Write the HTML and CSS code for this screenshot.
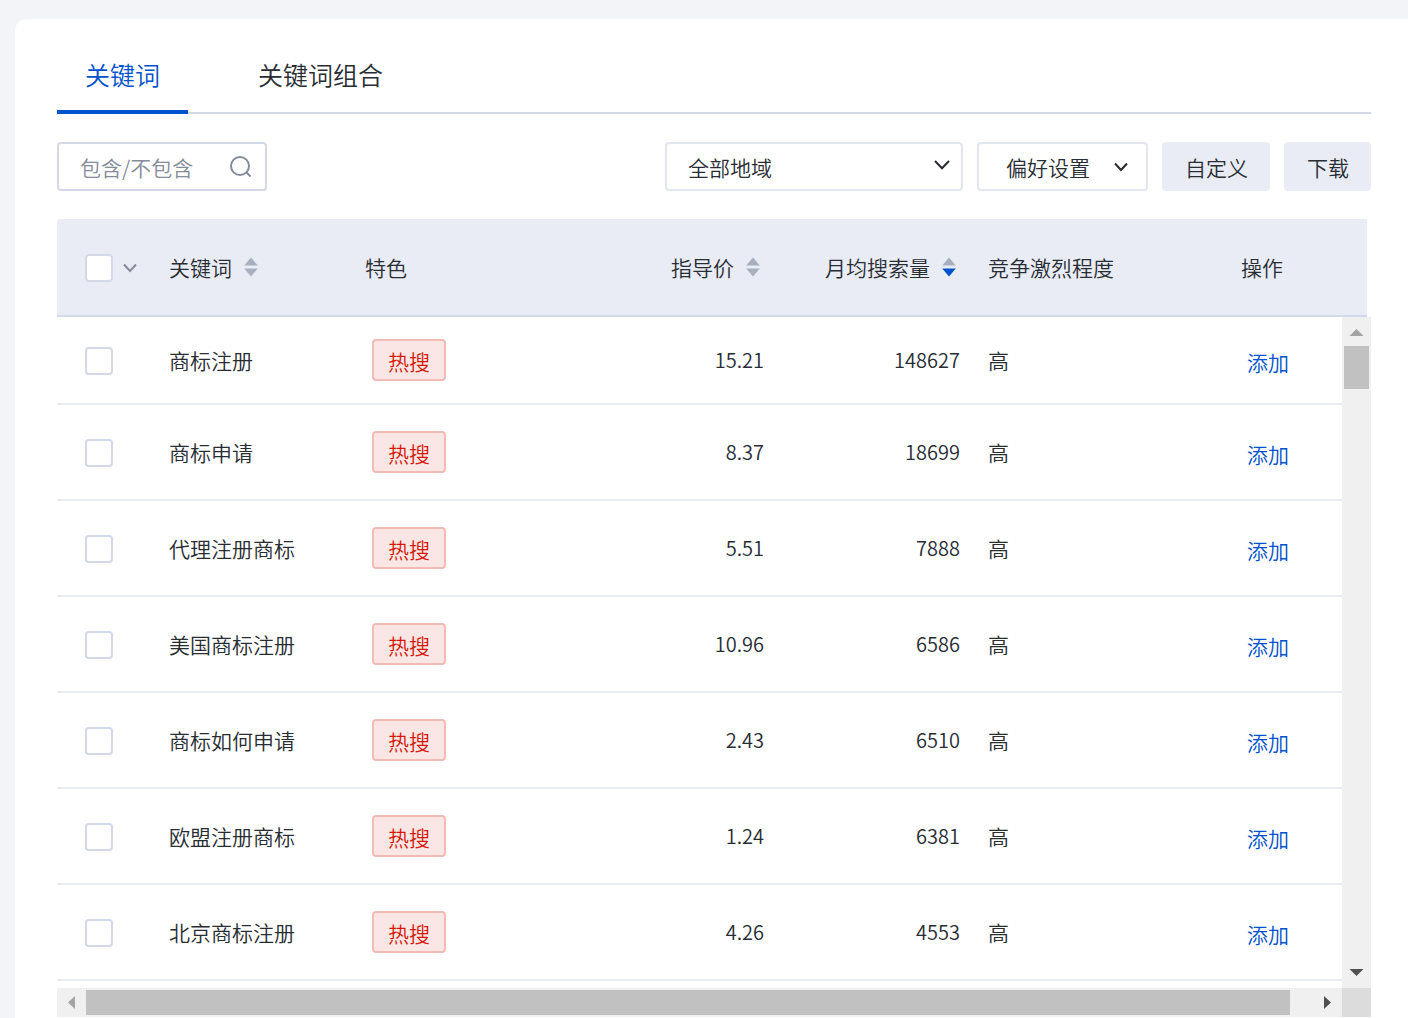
FILE: index.html
```html
<!DOCTYPE html>
<html lang="zh-CN">
<head>
<meta charset="utf-8">
<title>关键词</title>
<link rel="stylesheet" href="styles.css">
</head>
<body>
<svg class="defs" width="0" height="0" aria-hidden="true">
  <symbol id="sort" viewBox="0 0 14 20"><path class="up" d="M7 0.5 13.8 8.6H0.2Z"/><path class="down" d="M7 19.5 13.8 11.4H0.2Z"/></symbol>
</svg>
<main class="panel">
  <nav class="tabs">
    <button class="tab tab-active" type="button">关键词</button>
    <button class="tab" type="button">关键词组合</button>
  </nav>

  <div class="toolbar">
    <label class="search">
      <input class="search-input" type="text" placeholder="包含/不包含" aria-label="包含/不包含">
      <svg class="search-icon" width="24" height="24" viewBox="0 0 24 24"><circle cx="11" cy="11" r="9"/><path d="M17.5 17.5 21.5 21.5"/></svg>
    </label>
    <div class="region">
      <select class="region-select" aria-label="全部地域"><option>全部地域</option></select>
      <svg class="region-arrow" width="16" height="10" viewBox="0 0 16 10"><path d="M1 1 8 8.2 15 1"/></svg>
    </div>
    <button class="prefs" type="button">偏好设置<svg class="prefs-arrow" width="14" height="10" viewBox="0 0 14 10"><path d="M1 1.5 7 8 13 1.5"/></svg></button>
    <button class="btn" type="button">自定义</button>
    <button class="btn" type="button">下载</button>
  </div>

  <table class="grid grid-head">
    <colgroup><col class="c-check"><col class="c-word"><col class="c-tag"><col class="c-num"><col class="c-num"><col class="c-level"><col></colgroup>
    <thead>
      <tr>
        <th class="check"><div class="check-all"><input class="box" type="checkbox" aria-label="全选"><svg class="check-arrow" width="14" height="10" viewBox="0 0 14 10"><path d="M1 1.5 7 8 13 1.5"/></svg></div></th>
        <th><span class="sortable">关键词<svg class="sort" width="14" height="20"><use href="#sort"/></svg></span></th>
        <th>特色</th>
        <th class="num"><span class="sortable">指导价<svg class="sort" width="14" height="20"><use href="#sort"/></svg></span></th>
        <th class="num"><span class="sortable">月均搜索量<svg class="sort sort-desc" width="14" height="20"><use href="#sort"/></svg></span></th>
        <th>竞争激烈程度</th>
        <th>操作</th>
      </tr>
    </thead>
  </table>

  <div class="scroller">
    <div class="rows">
      <table class="grid grid-body">
        <colgroup><col class="c-check"><col class="c-word"><col class="c-tag"><col class="c-num"><col class="c-num"><col class="c-level"><col></colgroup>
        <tbody>
          <tr><td class="check"><input class="box" type="checkbox" aria-label="商标注册"></td><td>商标注册</td><td><span class="hot">热搜</span></td><td class="num">15.21</td><td class="num">148627</td><td>高</td><td class="action"><a class="add" href="#">添加</a></td></tr>
          <tr><td class="check"><input class="box" type="checkbox" aria-label="商标申请"></td><td>商标申请</td><td><span class="hot">热搜</span></td><td class="num">8.37</td><td class="num">18699</td><td>高</td><td class="action"><a class="add" href="#">添加</a></td></tr>
          <tr><td class="check"><input class="box" type="checkbox" aria-label="代理注册商标"></td><td>代理注册商标</td><td><span class="hot">热搜</span></td><td class="num">5.51</td><td class="num">7888</td><td>高</td><td class="action"><a class="add" href="#">添加</a></td></tr>
          <tr><td class="check"><input class="box" type="checkbox" aria-label="美国商标注册"></td><td>美国商标注册</td><td><span class="hot">热搜</span></td><td class="num">10.96</td><td class="num">6586</td><td>高</td><td class="action"><a class="add" href="#">添加</a></td></tr>
          <tr><td class="check"><input class="box" type="checkbox" aria-label="商标如何申请"></td><td>商标如何申请</td><td><span class="hot">热搜</span></td><td class="num">2.43</td><td class="num">6510</td><td>高</td><td class="action"><a class="add" href="#">添加</a></td></tr>
          <tr><td class="check"><input class="box" type="checkbox" aria-label="欧盟注册商标"></td><td>欧盟注册商标</td><td><span class="hot">热搜</span></td><td class="num">1.24</td><td class="num">6381</td><td>高</td><td class="action"><a class="add" href="#">添加</a></td></tr>
          <tr><td class="check"><input class="box" type="checkbox" aria-label="北京商标注册"></td><td>北京商标注册</td><td><span class="hot">热搜</span></td><td class="num">4.26</td><td class="num">4553</td><td>高</td><td class="action"><a class="add" href="#">添加</a></td></tr>
        </tbody>
      </table>
    </div>
    <div class="bar bar-y">
      <svg class="arrow arrow-off" width="29" height="29" viewBox="0 0 29 29"><path d="M14.500 12 21.500 19H7.500Z"/></svg>
      <div class="thumb-y"></div>
      <svg class="arrow arrow-end" width="29" height="29" viewBox="0 0 29 29"><path d="M14.500 17 21.500 10H7.500Z"/></svg>
    </div>
    <div class="bar bar-x">
      <svg class="arrow arrow-off" width="29" height="29" viewBox="0 0 29 29"><path d="M11 14.500 18 8V21Z"/></svg>
      <div class="track-x"><div class="thumb-x"></div></div>
      <svg class="arrow" width="29" height="29" viewBox="0 0 29 29"><path d="M18 14.500 11 8V21Z"/></svg>
    </div>
    <div class="corner"></div>
  </div>
</main>
</body>
</html>
```

FILE: styles.css
```css
* {
  box-sizing: border-box;
}

body {
  margin: 0;
  min-height: 100vh;
  padding: 19px 0 0 15px;
  display: flex;
  background: #f2f4f8;
  color: #282c33;
  font-family: "Noto Sans CJK SC", sans-serif;
  font-size: 21px;
  font-weight: 350;
  line-height: 28px;
}

button, input, select {
  margin: 0;
  color: inherit;
  font: inherit;
}

svg {
  flex: none;
}

.defs {
  position: absolute;
}

.panel {
  flex: 1;
  min-width: 0;
  padding: 0 37px 1px 42px;
  border-radius: 12px 0 0 0;
  background: #fff;
}

/* Tabs */
.tabs {
  display: flex;
  gap: 42px;
  height: 95px;
  border-bottom: 2px solid #d4d9e8;
}

.tab {
  margin-bottom: -2px;
  padding: 18px 28px 0;
  border: 0;
  border-bottom: 4px solid transparent;
  background: none;
  font-size: 25px;
  line-height: 32px;
}

.tab-active {
  border-color: #0052cc;
  color: #0052cc;
}

/* Toolbar */
.toolbar {
  display: flex;
  gap: 14px;
  padding: 28px 0;
}

.search {
  display: flex;
  align-items: center;
  width: 210px;
  height: 49px;
  margin-right: auto;
  padding: 0 12px 0 21px;
  border: 2px solid #d4d9e8;
  border-radius: 4px;
}

.search-input {
  flex: 1;
  min-width: 0;
  padding: 0;
  border: 0;
  outline: 0;
  background: none;
}

.search-input::placeholder {
  color: #848b99;
  opacity: 1;
}

.search-icon {
  fill: none;
  stroke: #848b99;
  stroke-width: 2;
}

.region {
  display: grid;
  align-items: center;
  width: 298px;
}

.region-select, .region-arrow {
  grid-area: 1 / 1;
}

.region-select {
  height: 49px;
  padding: 0 40px 0 21px;
  border: 2px solid #e2e6f0;
  border-radius: 4px;
  appearance: none;
  background: #fff;
}

.region-arrow {
  justify-self: end;
  margin: 0 13px 4px 0;
  pointer-events: none;
}

.region-arrow, .prefs-arrow, .check-arrow {
  fill: none;
  stroke: #282c33;
  stroke-width: 2;
}

.prefs {
  display: flex;
  align-items: center;
  gap: 24px;
  height: 49px;
  padding: 0 18px 0 27px;
  border: 2px solid #e2e6f0;
  border-radius: 4px;
  background: #fff;
}

.btn {
  height: 49px;
  padding: 0 22px 0 23px;
  border: 0;
  border-radius: 4px;
  background: #e9ecf5;
}

/* Table */
.grid {
  width: 100%;
  border-spacing: 0;
  table-layout: fixed;
}

.c-check { width: 98px; }
.c-word, .c-num { width: 196px; }
.c-tag { width: 231px; }
.c-level { width: 253px; }

th, td {
  padding: 0 14px;
  font-weight: 350;
  text-align: left;
  white-space: nowrap;
}

th.num, td.num {
  text-align: right;
}

td.num {
  font-size: 20px;
}

th.check, td.check {
  padding: 2px 0 0 28px;
}

.grid-head {
  width: calc(100% - 4px);
}

.grid-head th {
  height: 98px;
  border-bottom: 2px solid #d3d9e8;
  background: #e9ecf5;
}

.grid-head th:first-child {
  border-top-left-radius: 4px;
}

.check-all {
  display: flex;
  align-items: center;
  gap: 10px;
}

.check-arrow {
  stroke: #848b99;
}

.box {
  display: block;
  width: 28px;
  height: 28px;
  border: 2px solid #d4d9e8;
  border-radius: 4px;
  appearance: none;
  background: #fff;
}

.sortable {
  display: inline-flex;
  align-items: center;
  gap: 12px;
}

.num .sortable {
  padding-right: 4px;
}

.sort {
  --down: #a8b0bf;
}

.up {
  fill: #a8b0bf;
}

.down {
  fill: var(--down);
}

.sort-desc {
  --down: #0052cc;
}

.grid-body td {
  height: 96px;
  border-bottom: 2px solid #e9ecf3;
}

.grid-body tr:first-child td {
  height: 88px;
}

.hot {
  display: block;
  width: 74px;
  height: 42px;
  margin-left: 7px;
  padding-top: 6px;
  border: 2px solid #f2bbb6;
  border-radius: 4px;
  background: #fae6e4;
  color: #d11a0a;
  text-align: center;
}

.grid-body .action {
  padding-top: 4px;
}

.add {
  padding: 0 6px;
  color: #0052cc;
  text-decoration: none;
}

/* Scroll area */
.scroller {
  display: grid;
  grid-template-columns: 1fr 29px;
  grid-template-rows: auto 29px;
}

.rows {
  min-width: 0;
  padding-bottom: 7px;
}

.bar {
  display: flex;
  background: #f0f0f0;
}

.bar-y {
  flex-direction: column;
}

.thumb-y {
  height: 43px;
  margin: 0 2px;
  background: #c1c1c1;
}

.track-x {
  flex: 1;
  padding: 2px 23px 2px 0;
}

.thumb-x {
  height: 25px;
  background: #c1c1c1;
}

.arrow {
  fill: #505050;
}

.arrow-off {
  fill: #a3a3a3;
}

.arrow-end {
  margin-top: auto;
}

.corner {
  background: #dcdcdc;
}
```
